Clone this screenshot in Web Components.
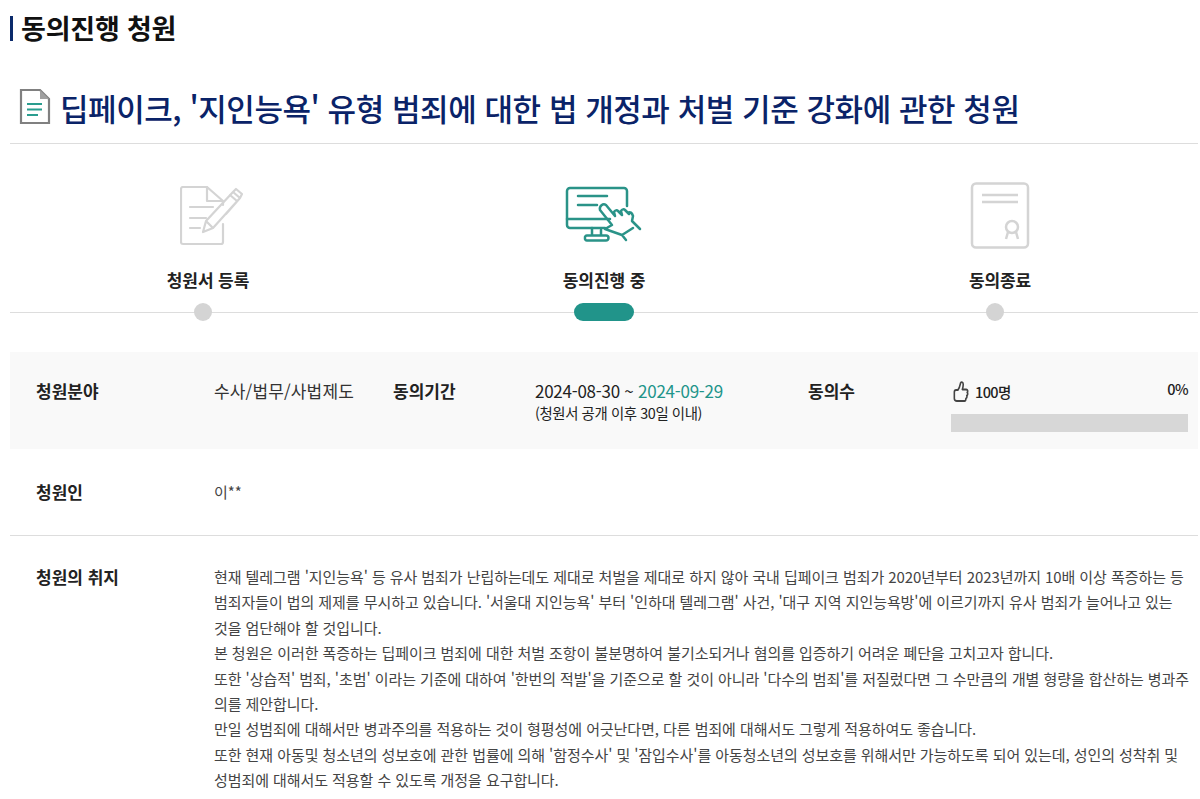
<!DOCTYPE html>
<html lang="ko"><head><meta charset="utf-8">
<style>
html,body{margin:0;background:#fff;height:799px;overflow:hidden}
body{font-family:"Noto Sans CJK KR","Noto Sans",sans-serif;color:#222}
</style></head><body>
<petition-page></petition-page>
<template id="t-page"><style>
:host{display:block;padding:0 2px 0 10px}
h1{margin:0;font-size:27px;line-height:40px;height:40px;padding-top:8px;font-weight:700;color:#111;display:flex;align-items:center;gap:8px;letter-spacing:-.2px}
h1::before{content:"";width:3px;height:25px;background:#0b2a6b;display:block}
.title{display:flex;align-items:center;gap:9px;height:96px;padding:24px 0 0 9px;border-bottom:1px solid #ddd;box-sizing:border-box}
.title svg{margin-bottom:3px}
h2{margin:0;font-size:31px;font-weight:500;color:#0a2368;line-height:40px;letter-spacing:-.44px;white-space:nowrap}
</style><h1>동의진행 청원</h1>
<div class="title"><svg width="32" height="37" viewBox="0 0 32 37"><path d="M2 2H21L30 11V35H2Z" fill="#fff" stroke="#808080" stroke-width="2.200"/><path d="M21 2V11H30Z" fill="#a0a0a0"/><path d="M8 16H23M8 21.500H23M8 27H19" stroke="#2a9d8f" stroke-width="2"/></svg><h2>딥페이크, '지인능욕' 유형 범죄에 대한 법 개정과 처벌 기준 강화에 관한 청원</h2></div>
<step-track></step-track><info-table></info-table></template>
<template id="t-track"><style>
:host{display:block;height:208px;position:relative}
.cols{display:grid;grid-template-columns:repeat(3,1fr);height:100%}
.line{position:absolute;left:0;right:0;top:168px;height:1px;background:#ddd}
</style><div class="line"></div><div class="cols">
<step-item label="청원서 등록" dot="-5"><svg style="margin-left:7px" width="64" height="60" viewBox="0 0 64 60" fill="none" stroke="#d4d4d4" stroke-width="2.200" stroke-linejoin="round" stroke-linecap="round"><path d="M43 38V56a2 2 0 0 1-2 2H3a2 2 0 0 1-2-2V3a2 2 0 0 1 2-2H27L43 15V19M27 1V15H43"/><path d="M10 21H33M10 32H26M10 42H20"/><path d="M23 46L26 35L53 6L60 12L33 42ZM26 35L33 42M50 9L57 15M53 6L56 3L62 8L60 12M60 12L46 28"/></svg></step-item>
<step-item label="동의진행 중" active><svg style="margin-bottom:5px" width="78" height="56" viewBox="0 0 78 56" fill="none" stroke="#2a9388" stroke-width="2.500" stroke-linejoin="round" stroke-linecap="round"><path d="M40 42H5a3 3 0 0 1-3-3V5a3 3 0 0 1 3-3H59a3 3 0 0 1 3 3V20"/><path d="M2 33H45M13 10H42M13 19H32"/><path d="M27 42V49M36 44V49M20 52a2 2 0 0 1 2-2.500H41a2 2 0 0 1 0 5H22a2 2 0 0 1-2-2.500Z"/><path d="M40 43L47 39L35 24C34 20 38 17 41 19L50 30L49 26C50 24 52 24 53 25L57 29L56 25C57 23 59 23 60 24L64 28L63 27C65 25 67 27 68 30L67 35L75 43M40 43L57 49L68 42M57 49L61 54"/></svg></step-item>
<step-item label="동의종료" dot="-5"><svg width="60" height="68" viewBox="0 0 60 68" fill="none" stroke="#d4d4d4" stroke-width="2.500"><rect x="2" y="1.500" width="56" height="64" rx="4"/><path d="M12 13H48M12 20H48"/><circle cx="42" cy="45" r="6"/><path d="M38 50L36 57M46 50L48 57"/></svg></step-item>
</div></template>
<template id="t-step"><style>
:host{display:flex;flex-direction:column;align-items:center;position:relative}
.ic{height:76px;margin-top:34px;display:flex;align-items:center;justify-content:center}
.lb{font-size:17px;font-weight:700;line-height:24px;margin-top:14px;color:#222;letter-spacing:-.1px}
.dot{position:absolute;top:159px;width:18px;height:18px;border-radius:9px;background:#d4d4d4}
:host([active]) .dot{width:60px;background:#21948a}
</style><div class="ic"><slot></slot></div><div class="lb"></div><div class="dot"></div></template>
<template id="t-table"><style>
:host{display:block;font-size:17px;color:#333}
.r1{display:grid;grid-template-columns:204px 179px 142px 273px 143px 237px;height:97px;background:#f9f9f9;box-sizing:border-box;padding-top:26px}
.r{display:grid;grid-template-columns:204px 1fr;border-bottom:1px solid #ddd}
.l{font-weight:700;color:#222;padding-left:26px;line-height:26px;font-size:17px}
.l2{padding-left:0}
.v{line-height:26px;letter-spacing:.15px}
.v.s{font-size:15px;color:#444;letter-spacing:0}
.d{letter-spacing:-.25px;line-height:26px;color:#222}
.d small{display:block;font-size:14.4px;line-height:18px;letter-spacing:-.4px}
.d b{font-weight:400;color:#21948a}
.n{display:flex;flex-direction:column}
.nt{display:flex;justify-content:space-between;height:36px;align-items:flex-start;font-size:14.500px;box-sizing:border-box;color:#222}
.nt span{display:flex;align-items:center;gap:6px;letter-spacing:-.6px;font-weight:500;margin-top:3px;padding-left:2px}
.nt .pc{margin-top:0;padding:0}
.bar{height:18px;background:#d7d7d7}
.r2{height:87px;padding-top:30px;box-sizing:border-box}
.r3{padding-top:28px;border:none}
.t{font-size:15px;line-height:25.4px;color:#444;padding-right:8.5px;letter-spacing:-.07px;word-break:break-all}
</style>
<div class="r1"><div class="l">청원분야</div><div class="v">수사/법무/사법제도</div><div class="l l2">동의기간</div><div class="d">2024-08-30 ~ <b>2024-09-29</b><small>(청원서 공개 이후 30일 이내)</small></div><div class="l l2">동의수</div><div class="n"><div class="nt"><span><svg width="16" height="21" viewBox="0 0 18 21" preserveAspectRatio="none" fill="none" stroke="#444" stroke-width="1.800" stroke-linejoin="round"><path d="M1.500 11C1.500 10 2 9 3.500 9H5.500C7.500 7 8 4 8.500 2C9.500 .5 11.500 1 11.500 3.500C11.500 5.500 11 7 10.500 8.500H15C16.500 8.500 17 10.500 16 11.500C17 12.500 16.500 14 15.500 14.500C16 16 15.500 17 14.500 17.500C14.500 19 14 20 13 20H4.500C2.500 20 1.500 19 1.500 17.500Z"/></svg>100명</span><span class="pc">0%</span></div><div class="bar"></div></div></div>
<div class="r r2"><div class="l">청원인</div><div class="v s">이**</div></div>
<div class="r r3"><div class="l">청원의 취지</div><div class="t">현재 텔레그램 '지인능욕' 등 유사 범죄가 난립하는데도 제대로 처벌을 제대로 하지 않아 국내 딥페이크 범죄가 2020년부터 2023년까지 10배 이상 폭증하는 등 범죄자들이 법의 제제를 무시하고 있습니다. '서울대 지인능욕' 부터 '인하대 텔레그램' 사건, '대구 지역 지인능욕방'에 이르기까지 유사 범죄가 늘어나고 있는 것을 엄단해야 할 것입니다.<br>본 청원은 이러한 폭증하는 딥페이크 범죄에 대한 처벌 조항이 불분명하여 불기소되거나 혐의를 입증하기 어려운 폐단을 고치고자 합니다.<br>또한 '상습적' 범죄, '초범' 이라는 기준에 대하여 '한번의 적발'을 기준으로 할 것이 아니라 '다수의 범죄'를 저질렀다면 그 수만큼의 개별 형량을 합산하는 병과주의를 제안합니다.<br>만일 성범죄에 대해서만 병과주의를 적용하는 것이 형평성에 어긋난다면, 다른 범죄에 대해서도 그렇게 적용하여도 좋습니다.<br>또한 현재 아동및 청소년의 성보호에 관한 법률에 의해 '함정수사' 및 '잠입수사'를 아동청소년의 성보호를 위해서만 가능하도록 되어 있는데, 성인의 성착취 및 성범죄에 대해서도 적용할 수 있도록 개정을 요구합니다.</div></div></template>
<script>
function mk(name,tid,init){customElements.define(name,class extends HTMLElement{connectedCallback(){if(this.shadowRoot)return;const s=this.attachShadow({mode:"open"});s.appendChild(document.getElementById(tid).content.cloneNode(true));if(init)init(this,s);}});}
mk("step-item","t-step",(h,s)=>{s.querySelector(".lb").textContent=h.getAttribute("label");const d=h.getAttribute("dot");if(d)s.querySelector(".dot").style.transform=`translateX(${d}px)`;});
mk("step-track","t-track");mk("info-table","t-table");mk("petition-page","t-page");
</script></body></html>
